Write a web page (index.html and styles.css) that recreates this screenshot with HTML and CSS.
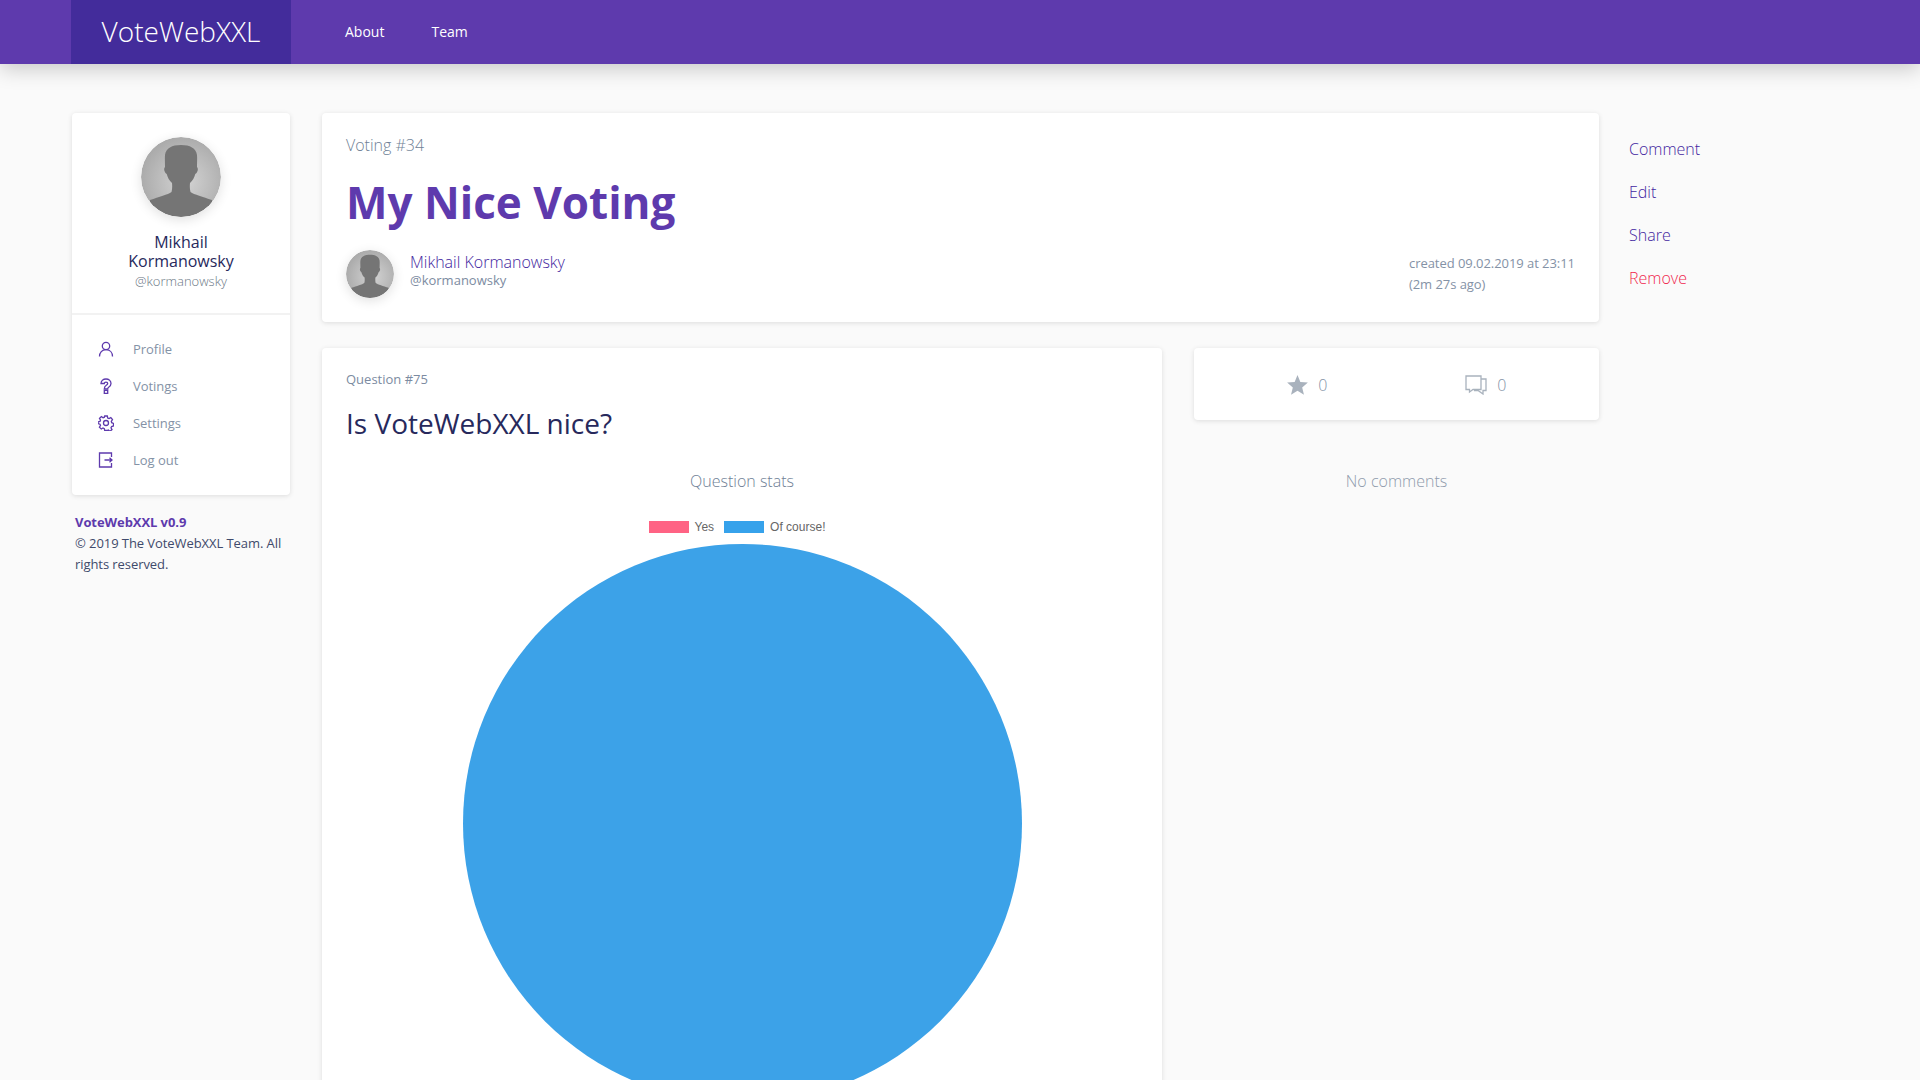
FILE: index.html
```html
<!DOCTYPE html>
<html lang="en">
<head>
    <meta charset="UTF-8">
    <meta name="viewport" content="width=device-width, initial-scale=1.0">
    <title>VoteWebXXL</title>
    <link rel="stylesheet" href="styles.css">
</head>
<body>
    <svg class="defs" width="0" height="0">
        <defs>
            <radialGradient id="avatar-bg" cx="55%" cy="55%" r="55%">
                <stop offset="0" stop-color="#d4d4d4"/>
                <stop offset="1" stop-color="#ababab"/>
            </radialGradient>
            <clipPath id="avatar-clip"><circle cx="40" cy="40" r="40"/></clipPath>
        </defs>
        <symbol id="avatar" viewBox="0 0 80 80">
            <circle cx="40" cy="40" r="40" fill="url(#avatar-bg)"/>
            <path clip-path="url(#avatar-clip)" fill="#757575" d="M40 8C31 8 25 11 24 18C23.700 22 24 26 24 30C23 31 23 32.500 23.500 34C24 35.500 24.800 36.500 25.700 37C26.700 40.500 28.200 43.500 31 46C31.300 49 31.300 52 30.500 55C27 57.500 18 60 9 63V85H71V63C62 60 53 57.500 49.500 55C48.700 52 48.700 49 49 46C51.800 43.500 53.300 40.500 54.300 37C55.200 36.500 56 35.500 56.500 34C57 32.500 57 31 56 30C56 26 56.300 22 56 18C55 11 49 8 40 8z"/>
        </symbol>
    </svg>

    <header class="navbar">
        <a class="brand">VoteWebXXL</a>
        <nav class="nav-links">
            <a>About</a>
            <a>Team</a>
        </nav>
    </header>

    <div class="page">
        <aside class="sidebar">
            <div class="card user-card">
                <div class="user-head">
                    <svg class="avatar avatar-lg"><use href="#avatar"/></svg>
                    <div class="user-name">Mikhail<br>Kormanowsky</div>
                    <div class="user-login">@kormanowsky</div>
                </div>
                <ul class="side-menu">
                    <li>
                        <svg class="menu-icon" viewBox="0 0 16 16"><circle cx="8" cy="5" r="3.700"/><path d="M1.500 15.500c0-4 2.500-6.800 6.500-6.800s6.500 2.800 6.500 6.800"/></svg>
                        <span>Profile</span>
                    </li>
                    <li>
                        <svg class="menu-icon" viewBox="0 0 16 16"><path d="M3 5.500C3 2.800 5.200 1 8 1s5 1.800 5 4.500c0 2-1.200 3-2.300 3.700-.7.5-1 .8-1 1.800H6.300c0-1.900.6-2.900 2-3.800C9.300 6.600 9.700 6.200 9.700 5.500 9.700 4.700 9 4.100 8 4.100S6.300 4.700 6.300 5.500z"/><rect x="6.300" y="12.400" width="3.400" height="3"/></svg>
                        <span>Votings</span>
                    </li>
                    <li>
                        <svg class="menu-icon" viewBox="0 0 16 16"><circle cx="8" cy="8" r="2.500"/><path d="M6.700 1h2.600l.4 2 1.300.6 1.800-1 1.700 2-1.200 1.700.4 1.400 1.800.7v2.600l-1.900.5-.6 1.300 1 1.800-2 1.700-1.700-1.200-1.300.5L8.800 15.500H6.700l-.4-1.900-1.300-.6-1.700 1-1.900-1.800 1.100-1.700-.5-1.300-1.900-.5V7l1.900-.6.500-1.300-1-1.700 1.900-1.800 1.700 1.100 1.300-.5z"/></svg>
                        <span>Settings</span>
                    </li>
                    <li>
                        <svg class="menu-icon" viewBox="0 0 16 16"><path d="M13.500 5V1h-12v14h12v-4"/><path d="M6.500 8h7.500M11.500 5.800 14 8l-2.500 2.200"/></svg>
                        <span>Log out</span>
                    </li>
                </ul>
            </div>
            <div class="side-footer">
                <strong>VoteWebXXL v0.9</strong><br>
                © 2019 The VoteWebXXL Team. All rights reserved.
            </div>
        </aside>

        <main class="content">
            <section class="card voting-card">
                <div class="voting-num">Voting #34</div>
                <h1 class="voting-title">My Nice Voting</h1>
                <div class="voting-meta">
                    <svg class="avatar avatar-sm"><use href="#avatar"/></svg>
                    <div class="author">
                        <a class="author-name">Mikhail Kormanowsky</a>
                        <div class="author-login">@kormanowsky</div>
                    </div>
                    <div class="created">created 09.02.2019 at 23:11<br>(2m 27s ago)</div>
                </div>
            </section>

            <div class="columns">
                <section class="card question-card">
                    <div class="question-num">Question #75</div>
                    <h2 class="question-title">Is VoteWebXXL nice?</h2>
                    <div class="chart-title">Question stats</div>
                    <div class="legend">
                        <i class="swatch pink"></i><span>Yes</span>
                        <i class="swatch blue"></i><span>Of course!</span>
                    </div>
                    <div class="pie"></div>
                </section>

                <div class="side-col">
                    <section class="card stats-card">
                        <div class="stat">
                            <svg class="stat-star" viewBox="0 0 22 21"><path d="M11 0l3 7.300 7.900.6-6 5.100 1.900 7.700L11 16.600 4.200 20.700 6.100 13l-6-5.100L8 7.300z"/></svg>
                            <span>0</span>
                        </div>
                        <div class="stat">
                            <svg class="stat-chat" viewBox="0 0 22 20"><path d="M16 14.500V1H1v13.500h3.500v2.500l3.500-2.500z"/><path d="M16 4h5v11.500h-3V19l-5-3.500H9"/></svg>
                            <span>0</span>
                        </div>
                    </section>
                    <div class="no-comments">No comments</div>
                </div>
            </div>
        </main>

        <ul class="actions">
            <li><a>Comment</a></li>
            <li><a>Edit</a></li>
            <li><a>Share</a></li>
            <li><a class="danger">Remove</a></li>
        </ul>
    </div>
</body>
</html>
```

FILE: styles.css
```css
html, body{
    margin: 0;
    height: 100%;
    overflow: hidden;
}
body{
    background: #fafafa;
    font-family: "Open Sans", sans-serif;
    color: #27295c;
}
ul{
    list-style: none;
    margin: 0;
    padding: 0;
}
.defs{
    position: absolute;
}
.navbar{
    display: flex;
    height: 64px;
    padding-left: 71px;
    background: #5e3aad;
    box-shadow: 0 5px 20px rgba(0, 0, 0, 0.2);
    color: #fff;
    position: relative;
}
.brand{
    width: 220px;
    line-height: 62px;
    height: 64px;
    background: #432c9b;
    text-align: center;
    font-size: 28px;
    font-weight: 300;
}
.nav-links{
    display: flex;
    align-items: center;
    gap: 47px;
    margin-left: 54px;
    padding-bottom: 2px;
    font-size: 14px;
}
.page{
    display: flex;
    padding: 49px 0 0 72px;
}
.card{
    background: #fff;
    border-radius: 4px;
    box-shadow: 0 1px 5px rgba(0, 0, 0, 0.12);
}
.sidebar{
    width: 218px;
    flex: none;
}
.user-head{
    padding: 24px 24px 24px;
    border-bottom: 2px solid #f2f2f2;
    text-align: center;
    height: 202px;
    box-sizing: border-box;
}
.avatar{
    display: block;
    border-radius: 50%;
    box-shadow: 0 3px 12px rgba(0, 0, 0, 0.12);
}
.avatar-lg{
    width: 80px;
    height: 80px;
    margin: 0 auto 16px;
}
.avatar-sm{
    width: 48px;
    height: 48px;
    flex: none;
}
.user-name{
    font-size: 16px;
    line-height: 19px;
}
.user-login{
    margin-top: 1px;
    font-size: 13px;
    line-height: 19px;
    font-weight: 300;
    color: #6b7785;
}
.side-menu{
    padding: 15px 26px 17px;
}
.side-menu li{
    display: flex;
    align-items: center;
    height: 37px;
    font-size: 13px;
    letter-spacing: -0.03px;
    color: #8492a6;
}
.menu-icon{
    width: 16px;
    height: 16px;
    margin-right: 19px;
    fill: none;
    stroke: #5e3aad;
    stroke-width: 1.300;
}
.side-footer{
    padding: 17px 0 0 3px;
    font-size: 13px;
    line-height: 21px;
    letter-spacing: -0.07px;
    color: #3f4a6b;
}
.side-footer strong{
    color: #5e3aad;
}
.content{
    width: 1277px;
    flex: none;
    margin-left: 32px;
}
.voting-card{
    height: 209px;
    box-sizing: border-box;
    padding: 21px 24px 0;
}
.voting-num{
    font-size: 16px;
    line-height: 22px;
    font-weight: 300;
    color: #6f7f96;
}
.voting-title{
    margin: 16px 0 18px;
    font-size: 44px;
    line-height: 60px;
    font-weight: 700;
    color: #5e3aad;
}
.voting-meta{
    display: flex;
    align-items: center;
}
.author{
    margin-left: 16px;
    margin-bottom: 6px;
}
.author-name{
    display: block;
    font-size: 16px;
    line-height: 19px;
    font-weight: 300;
    color: #4326a0;
}
.author-login{
    font-size: 13px;
    line-height: 17px;
    color: #7c8ba1;
}
.created{
    margin-left: auto;
    font-size: 13px;
    line-height: 21px;
    letter-spacing: -0.05px;
    color: #8492a6;
}
.columns{
    display: flex;
    gap: 32px;
    margin-top: 26px;
}
.question-card{
    width: 840px;
    flex: none;
    box-sizing: border-box;
    padding: 22px 24px 0;
    height: 900px;
}
.question-num{
    font-size: 13px;
    line-height: 18px;
    color: #7c8ba1;
}
.question-title{
    margin: 16px 0 0;
    font-size: 28px;
    line-height: 38px;
    font-weight: 400;
}
.chart-title{
    margin-top: 28px;
    font-size: 16px;
    line-height: 22px;
    font-weight: 300;
    color: #6f7f96;
    text-align: center;
}
.legend{
    display: flex;
    justify-content: center;
    align-items: center;
    margin-top: 28px;
    padding-right: 10px;
    height: 14px;
    font-family: "Liberation Sans", sans-serif;
    font-size: 12px;
    color: #666;
}
.swatch{
    width: 40px;
    height: 12px;
    margin-right: 6px;
}
.legend span + .swatch{
    margin-left: 10px;
}
.pink{
    background: #ff6384;
}
.blue{
    background: #36a2eb;
}
.pie{
    width: 559px;
    height: 559px;
    margin: 10px auto 0;
    border-radius: 50%;
    background: #3ca2e8;
}
.side-col{
    width: 405px;
    flex: none;
}
.stats-card{
    display: flex;
    height: 72px;
    align-items: center;
    padding: 1px 24px 0;
    box-sizing: border-box;
}
.stat{
    flex: 1;
    display: flex;
    align-items: center;
    justify-content: center;
    gap: 10px;
    font-size: 16px;
    font-weight: 300;
    color: #8492a6;
}
.stat-star{
    width: 21px;
    height: 20px;
    fill: #a9b2bd;
}
.stat-chat{
    width: 22px;
    height: 20px;
    fill: none;
    stroke: #a9b2bd;
    stroke-width: 1.300;
}
.no-comments{
    margin-top: 50px;
    text-align: center;
    font-size: 16px;
    line-height: 22px;
    font-weight: 300;
    color: #8f9bac;
}
.actions{
    margin-left: 30px;
    padding-top: 15px;
    font-size: 16px;
    font-weight: 300;
    color: #4326a0;
}
.actions li{
    height: 43px;
    line-height: 43px;
}
.danger{
    color: #f01f4d;
}
```
